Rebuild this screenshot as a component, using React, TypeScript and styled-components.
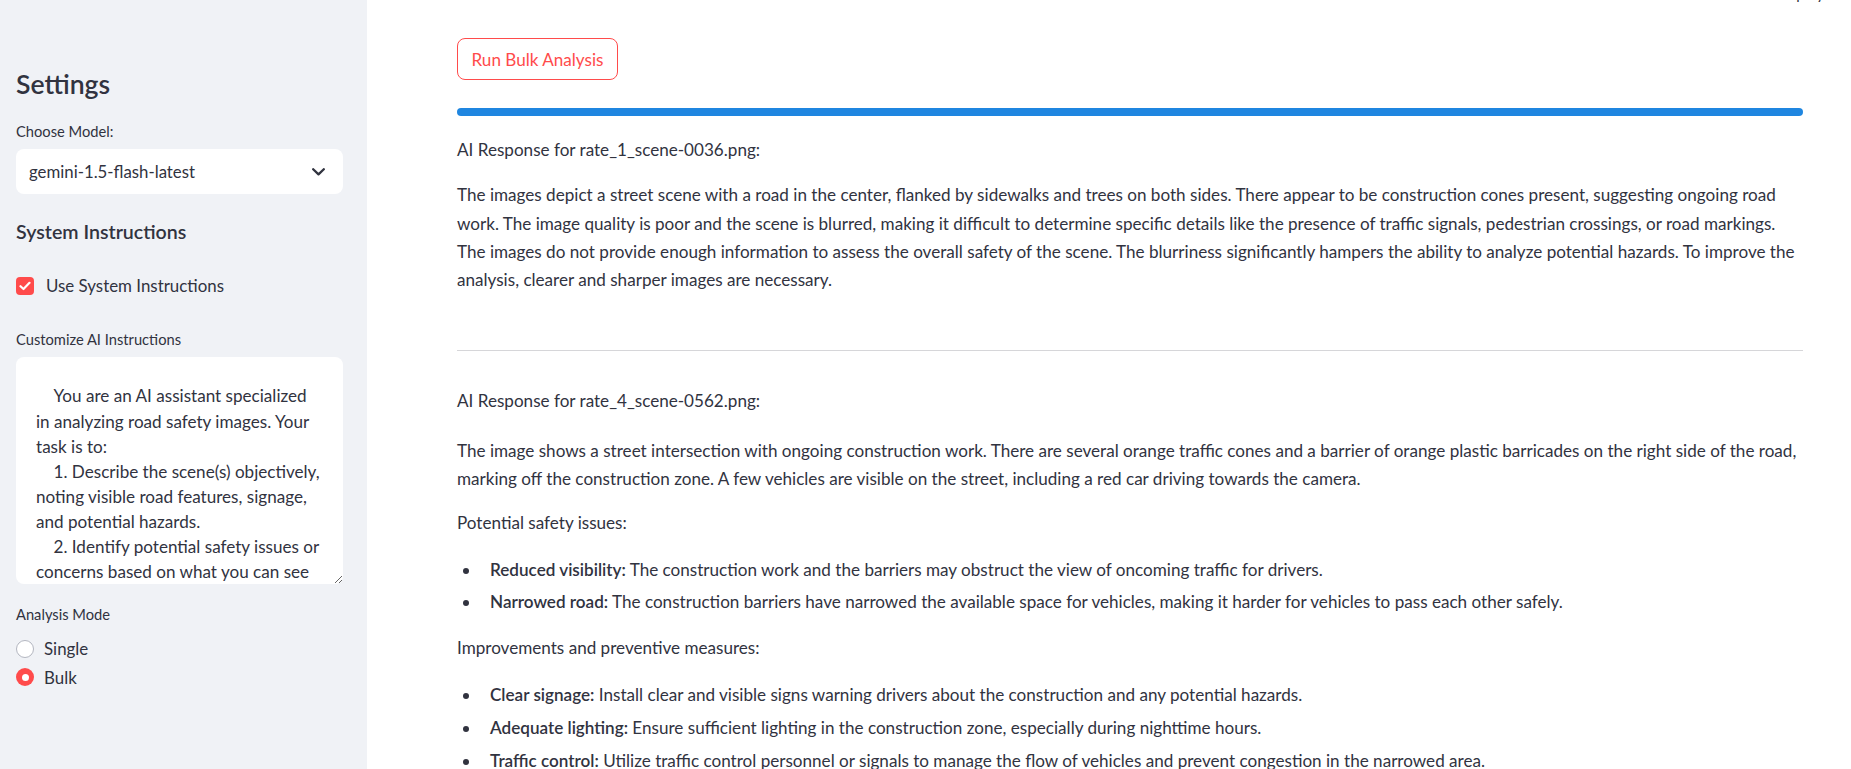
import React from "react";
import styled, { createGlobalStyle } from "styled-components";

const GlobalStyle = createGlobalStyle`
  html, body { margin: 0; padding: 0; background: #ffffff; }
  body { font-family: Lato, "Noto Sans", sans-serif; color: #31333f; }
  * { box-sizing: border-box; }
`;

const TEXT = "#31333f";
const RED = "#ff4b4b";
const BODY_SIZE = 17.1;

const Page = styled.div`
  display: flex;
  height: 769px;
  overflow: hidden;
  position: relative;
`;

const Sidebar = styled.aside`
  width: 367px;
  flex: 0 0 367px;
  background: #f0f2f6;
  padding: 69px 24px 0 16px;
  display: flex;
  flex-direction: column;
  & > * { flex-shrink: 0; }
`;

const SideTitle = styled.h2<{ $size: number; $mt?: number }>`
  margin: ${(p) => p.$mt ?? 0}px 0 0 0;
  font-size: ${(p) => p.$size}px;
  line-height: 1.2;
  font-weight: 600;
  color: ${TEXT};
`;

const FieldLabel = styled.div<{ $mt: number }>`
  margin-top: ${(p) => p.$mt}px;
  font-size: 14.7px;
  line-height: 21px;
  color: ${TEXT};
`;

const Select = styled.div`
  margin-top: 7.5px;
  height: 45px;
  background: #ffffff;
  border-radius: 8px;
  display: flex;
  align-items: center;
  justify-content: space-between;
  padding: 0 18px 0 13px;
  font-size: 16.8px;
  color: ${TEXT};
`;

const CheckRow = styled.label`
  margin-top: 30px;
  height: 24px;
  display: flex;
  align-items: center;
  gap: 12px;
  font-size: 16.9px;
  color: ${TEXT};
`;

const CheckBox = styled.span`
  width: 18px;
  height: 18px;
  border-radius: 4px;
  background: ${RED};
  display: flex;
  align-items: center;
  justify-content: center;
`;

const TextArea = styled.textarea`
  display: block;
  margin-top: 7.5px;
  height: 227px;
  width: 100%;
  border: none;
  border-radius: 8px;
  background: #ffffff;
  padding: 26px 22px 0 20px;
  font-family: Lato, "Noto Sans", sans-serif;
  font-size: 17.1px;
  line-height: 25.1px;
  color: ${TEXT};
  resize: vertical;
  overflow: hidden;
  outline: none;
`;

const RadioGroup = styled.div`
  display: flex;
  flex-direction: column;
  margin-top: 11.5px;
  gap: 4.3px;
`;

const RadioRow = styled.label`
  height: 24px;
  display: flex;
  align-items: center;
  gap: 10px;
  font-size: 16.9px;
  color: ${TEXT};
`;

const RadioDot = styled.span<{ $on: boolean }>`
  width: 18px;
  height: 18px;
  border-radius: 50%;
  background: ${(p) => (p.$on ? RED : "#ffffff")};
  border: ${(p) => (p.$on ? "none" : "1px solid #b3b6c0")};
  display: flex;
  align-items: center;
  justify-content: center;
  &::after {
    content: "";
    display: ${(p) => (p.$on ? "block" : "none")};
    width: 7px;
    height: 7px;
    border-radius: 50%;
    background: #ffffff;
  }
`;

const Main = styled.main`
  flex: 1;
  min-width: 0;
  padding: 38px 48px 0 90px;
  display: flex;
  flex-direction: column;
  align-items: stretch;
  & > * { flex-shrink: 0; }
`;

const RunButton = styled.button`
  align-self: flex-start;
  height: 42px;
  padding: 0 13.5px;
  border: 1px solid ${RED};
  border-radius: 8px;
  background: #ffffff;
  color: ${RED};
  font-family: Lato, "Noto Sans", sans-serif;
  font-size: ${BODY_SIZE}px;
  cursor: pointer;
`;

const Progress = styled.div`
  margin-top: 28px;
  height: 8px;
  border-radius: 4px;
  background: #1f86e0;
`;

const Para = styled.p<{ $mt: number }>`
  margin: ${(p) => p.$mt}px 0 0 0;
  font-size: ${BODY_SIZE}px;
  line-height: 28.3px;
  color: ${TEXT};
  white-space: pre-line;
`;

const Rule = styled.hr`
  margin: 56px 0 0 0;
  border: none;
  border-top: 1px solid rgba(49, 51, 63, 0.2);
  height: 0;
`;

const List = styled.ul<{ $mt: number }>`
  margin: ${(p) => p.$mt}px 0 0 0;
  padding-left: 24px;
  display: flex;
  flex-direction: column;
  gap: 4.5px;
`;

const Item = styled.li`
  font-size: ${BODY_SIZE}px;
  line-height: 28.3px;
  color: ${TEXT};
  padding-left: 9px;
  b { font-weight: 600; }
`;

const HeaderPeek = styled.span`
  position: absolute;
  top: -16px;
  left: 1777px;
  font-size: 15px;
  line-height: 18px;
  color: ${TEXT};
`;

const instructions = `    You are an AI assistant specialized in analyzing road safety images. Your task is to:
    1. Describe the scene(s) objectively, noting visible road features, signage, and potential hazards.
    2. Identify potential safety issues or concerns based on what you can see in the image(s).
    3. Suggest improvements or preventive measures to enhance road safety.
    4. If the image quality is poor, mention it and explain how it limits the analysis.`;

const response1 = `The images depict a street scene with a road in the center, flanked by sidewalks and trees on both sides. There appear to be construction cones present, suggesting ongoing road
work. The image quality is poor and the scene is blurred, making it difficult to determine specific details like the presence of traffic signals, pedestrian crossings, or road markings.
The images do not provide enough information to assess the overall safety of the scene. The blurriness significantly hampers the ability to analyze potential hazards. To improve the
analysis, clearer and sharper images are necessary.`;

const response2 = `The image shows a street intersection with ongoing construction work. There are several orange traffic cones and a barrier of orange plastic barricades on the right side of the road,
marking off the construction zone. A few vehicles are visible on the street, including a red car driving towards the camera.`;

const Chevron = () => (
  <svg width="13" height="8" viewBox="0 0 13 8" fill="none">
    <path d="M1.2 1.2 L6.5 6.4 L11.8 1.2" stroke={TEXT} strokeWidth="2.3" strokeLinecap="round" strokeLinejoin="round" />
  </svg>
);

const Check = () => (
  <svg width="12" height="10" viewBox="0 0 12 10" fill="none">
    <path d="M1.5 5.2 L4.5 8 L10.5 1.8" stroke="#ffffff" strokeWidth="2.2" strokeLinecap="round" strokeLinejoin="round" />
  </svg>
);

export default function App() {
  return (
    <>
      <GlobalStyle />
      <Page>
        <HeaderPeek>Deploy</HeaderPeek>
        <Sidebar>
          <SideTitle $size={26.6}>Settings</SideTitle>
          <FieldLabel $mt={20}>Choose Model:</FieldLabel>
          <Select>
            <span>gemini-1.5-flash-latest</span>
            <Chevron />
          </Select>
          <SideTitle $size={19.6} $mt={26}>System Instructions</SideTitle>
          <CheckRow>
            <CheckBox>
              <Check />
            </CheckBox>
            Use System Instructions
          </CheckRow>
          <FieldLabel $mt={31}>Customize AI Instructions</FieldLabel>
          <TextArea defaultValue={instructions} />
          <FieldLabel $mt={20}>Analysis Mode</FieldLabel>
          <RadioGroup>
            <RadioRow>
              <RadioDot $on={false} />
              Single
            </RadioRow>
            <RadioRow>
              <RadioDot $on={true} />
              Bulk
            </RadioRow>
          </RadioGroup>
        </Sidebar>
        <Main>
          <RunButton>Run Bulk Analysis</RunButton>
          <Progress />
          <Para $mt={20}>AI Response for rate_1_scene-0036.png:</Para>
          <Para $mt={17}>{response1}</Para>
          <Rule />
          <Para $mt={36}>AI Response for rate_4_scene-0562.png:</Para>
          <Para $mt={21}>{response2}</Para>
          <Para $mt={15.5}>Potential safety issues:</Para>
          <List $mt={18.5}>
            <Item>
              <b>Reduced visibility:</b> The construction work and the barriers may obstruct the view of oncoming traffic for drivers.
            </Item>
            <Item>
              <b>Narrowed road:</b> The construction barriers have narrowed the available space for vehicles, making it harder for vehicles to pass each other safely.
            </Item>
          </List>
          <Para $mt={17.5}>Improvements and preventive measures:</Para>
          <List $mt={18.5}>
            <Item>
              <b>Clear signage:</b> Install clear and visible signs warning drivers about the construction and any potential hazards.
            </Item>
            <Item>
              <b>Adequate lighting:</b> Ensure sufficient lighting in the construction zone, especially during nighttime hours.
            </Item>
            <Item>
              <b>Traffic control:</b> Utilize traffic control personnel or signals to manage the flow of vehicles and prevent congestion in the narrowed area.
            </Item>
          </List>
        </Main>
      </Page>
    </>
  );
}
